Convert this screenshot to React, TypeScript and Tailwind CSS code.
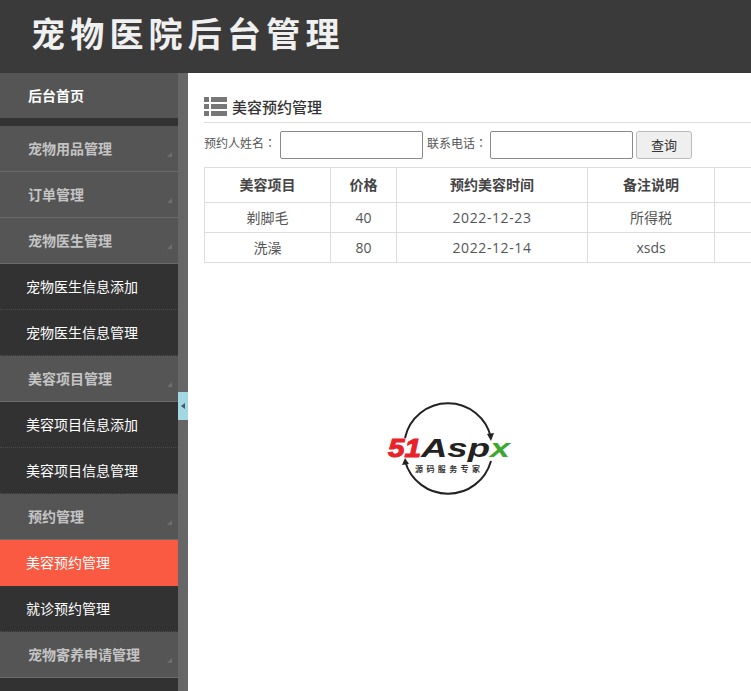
const font = "[font-family:'Open_Sans','Noto_Sans_CJK_SC',sans-serif]"

type MenuItem = { label: string; kind: 'head' | 'sub' | 'active' }

const menu: MenuItem[] = [
  { label: '宠物用品管理', kind: 'head' },
  { label: '订单管理', kind: 'head' },
  { label: '宠物医生管理', kind: 'head' },
  { label: '宠物医生信息添加', kind: 'sub' },
  { label: '宠物医生信息管理', kind: 'sub' },
  { label: '美容项目管理', kind: 'head' },
  { label: '美容项目信息添加', kind: 'sub' },
  { label: '美容项目信息管理', kind: 'sub' },
  { label: '预约管理', kind: 'head' },
  { label: '美容预约管理', kind: 'active' },
  { label: '就诊预约管理', kind: 'sub' },
  { label: '宠物寄养申请管理', kind: 'head' },
]

const rows = [
  ['剃脚毛', '40', '2022-12-23', '所得税'],
  ['洗澡', '80', '2022-12-14', 'xsds'],
]

function MenuRow({ item }: { item: MenuItem }) {
  if (item.kind === 'head') {
    return (
      <div className="relative flex h-[46px] items-center border-b border-[#6a6a6a] bg-[#555555] pl-7 text-sm font-bold text-[#c4c4c4]">
        {item.label}
        <span className="absolute bottom-[14px] right-[6px] h-0 w-0 border-b-[5px] border-l-[5px] border-b-[#6e6e6e] border-l-transparent" />
      </div>
    )
  }
  if (item.kind === 'active') {
    return <div className="flex h-[46px] items-center bg-[#f95a41] pl-[26px] text-sm text-white">{item.label}</div>
  }
  return (
    <div className="flex h-[46px] items-center border-b border-dotted border-[#4a4a4a] bg-[#323232] pl-[26px] text-sm text-white">
      {item.label}
    </div>
  )
}

function Sidebar() {
  return (
    <aside className="relative flex w-[188px] shrink-0 border-r-[10px] border-[#666666] bg-[#323232] box-border">
      <div className="w-[178px]">
        <div className="flex h-[45px] items-center bg-[#555555] pl-7 text-sm font-bold text-white">后台首页</div>
        <div className="h-2 bg-[#323232]" />
        {menu.map((item) => (
          <MenuRow key={item.label} item={item} />
        ))}
      </div>
      <div className="absolute left-[178px] top-[319px] flex h-[28px] w-[10px] items-center justify-center bg-[#a3d8e2]">
        <span className="h-0 w-0 border-y-[3px] border-r-[4px] border-y-transparent border-r-[#3f5a66]" />
      </div>
    </aside>
  )
}

function Logo() {
  return (
    <svg width="126" height="94" viewBox="0 0 126 94" className="ml-[199px] mt-[139px] block">
      <path d="M18 36 A44 44 0 0 1 104 36" fill="none" stroke="#222" strokeWidth="2" />
      <path d="M100 32 L104 39 L107 31" fill="#222" />
      <path d="M104 59 A44.6 44.6 0 0 1 18 59" fill="none" stroke="#222" strokeWidth="2" />
      <path d="M15 63 L18 56 L22 62" fill="#222" />
      <text x="1" y="55" textLength="33" lengthAdjust="spacingAndGlyphs" fontFamily="Liberation Sans" fontSize="25" fontWeight="700" fontStyle="italic" fill="#e8222a" stroke="#e8222a" strokeWidth="1">51</text>
      <text x="34" y="55" textLength="69" lengthAdjust="spacingAndGlyphs" fontFamily="Liberation Sans" fontSize="25" fontWeight="700" fontStyle="italic" fill="#222">Asp</text>
      <text x="103" y="55" textLength="20" lengthAdjust="spacingAndGlyphs" fontFamily="Liberation Sans" fontSize="25" fontWeight="700" fontStyle="italic" fill="#3da82e">x</text>
      <text x="28" y="70" textLength="65" fontFamily="Noto Sans CJK SC" fontSize="8" fontWeight="700" fill="#333">源码服务专家</text>
    </svg>
  )
}

function Colon() {
  return <span className="[font-family:'Noto_Sans_CJK_TC',sans-serif]">：</span>
}

function Content() {
  return (
    <main className="min-w-0 flex-1 overflow-hidden bg-white">
      <div className="ml-4 flex h-[50px] items-center gap-[5px] border-b border-[#dddddd] pt-[19px]">
        <svg width="23" height="20" viewBox="0 0 23 20" className="shrink-0">
          <path
            fill="#777"
            d="M0 0h5v5H0zM7 0h16v5H7zM0 7h5v5H0zM7 7h16v5H7zM0 14h5v5H0zM7 14h16v5H7z"
          />
        </svg>
        <span className="text-[15px] font-medium text-[#333333]">美容预约管理</span>
      </div>
      <div className="ml-4 mt-2 flex h-7 items-center text-xs text-[#555555]">
        <span className="w-[76px] pb-[3px]">预约人姓名<Colon /></span>
        <input className="h-7 w-[143px] rounded-[2px] border border-[#8a8a8a] bg-white" />
        <span className="ml-1 w-[63px] pb-[3px]">联系电话<Colon /></span>
        <input className="h-7 w-[143px] rounded-[2px] border border-[#8a8a8a] bg-white" />
        <button className="ml-[3px] h-7 w-14 rounded-[3px] border border-[#bbbbbb] bg-[#efefef] pt-px text-[13px] text-[#333333]">
          查询
        </button>
      </div>
      <table className="ml-4 mt-2 w-[560px] table-fixed border-collapse text-sm text-[#555555]">
        <colgroup>
          <col className="w-[126px]" />
          <col className="w-[66px]" />
          <col className="w-[191px]" />
          <col className="w-[127px]" />
          <col />
        </colgroup>
        <thead>
          <tr className="h-[35px]">
            {['美容项目', '价格', '预约美容时间', '备注说明', ''].map((h, i) => (
              <th key={i} className="border border-[#dddddd] text-center font-bold text-[#444444]">
                {h}
              </th>
            ))}
          </tr>
        </thead>
        <tbody>
          {rows.map((row) => (
            <tr key={row[0]} className="h-[30px]">
              {[...row, ''].map((cell, i) => (
                <td key={i} className={i === 2 ? 'border border-[#dddddd] text-center tracking-[0.6px]' : 'border border-[#dddddd] text-center'}>
                  {cell}
                </td>
              ))}
            </tr>
          ))}
        </tbody>
      </table>
      <Logo />
    </main>
  )
}

export default function App() {
  return (
    <div className={`flex h-[691px] w-[751px] flex-col overflow-hidden bg-white ${font}`}>
      <header className="flex h-[73px] shrink-0 items-center bg-[#3a3a3a] pb-[6px] pl-[31px]">
        <h1 className="text-[34px] font-bold leading-none tracking-[5.2px] text-[#f0f0f0]">宠物医院后台管理</h1>
      </header>
      <div className="flex min-h-0 flex-1">
        <Sidebar />
        <Content />
      </div>
    </div>
  )
}
